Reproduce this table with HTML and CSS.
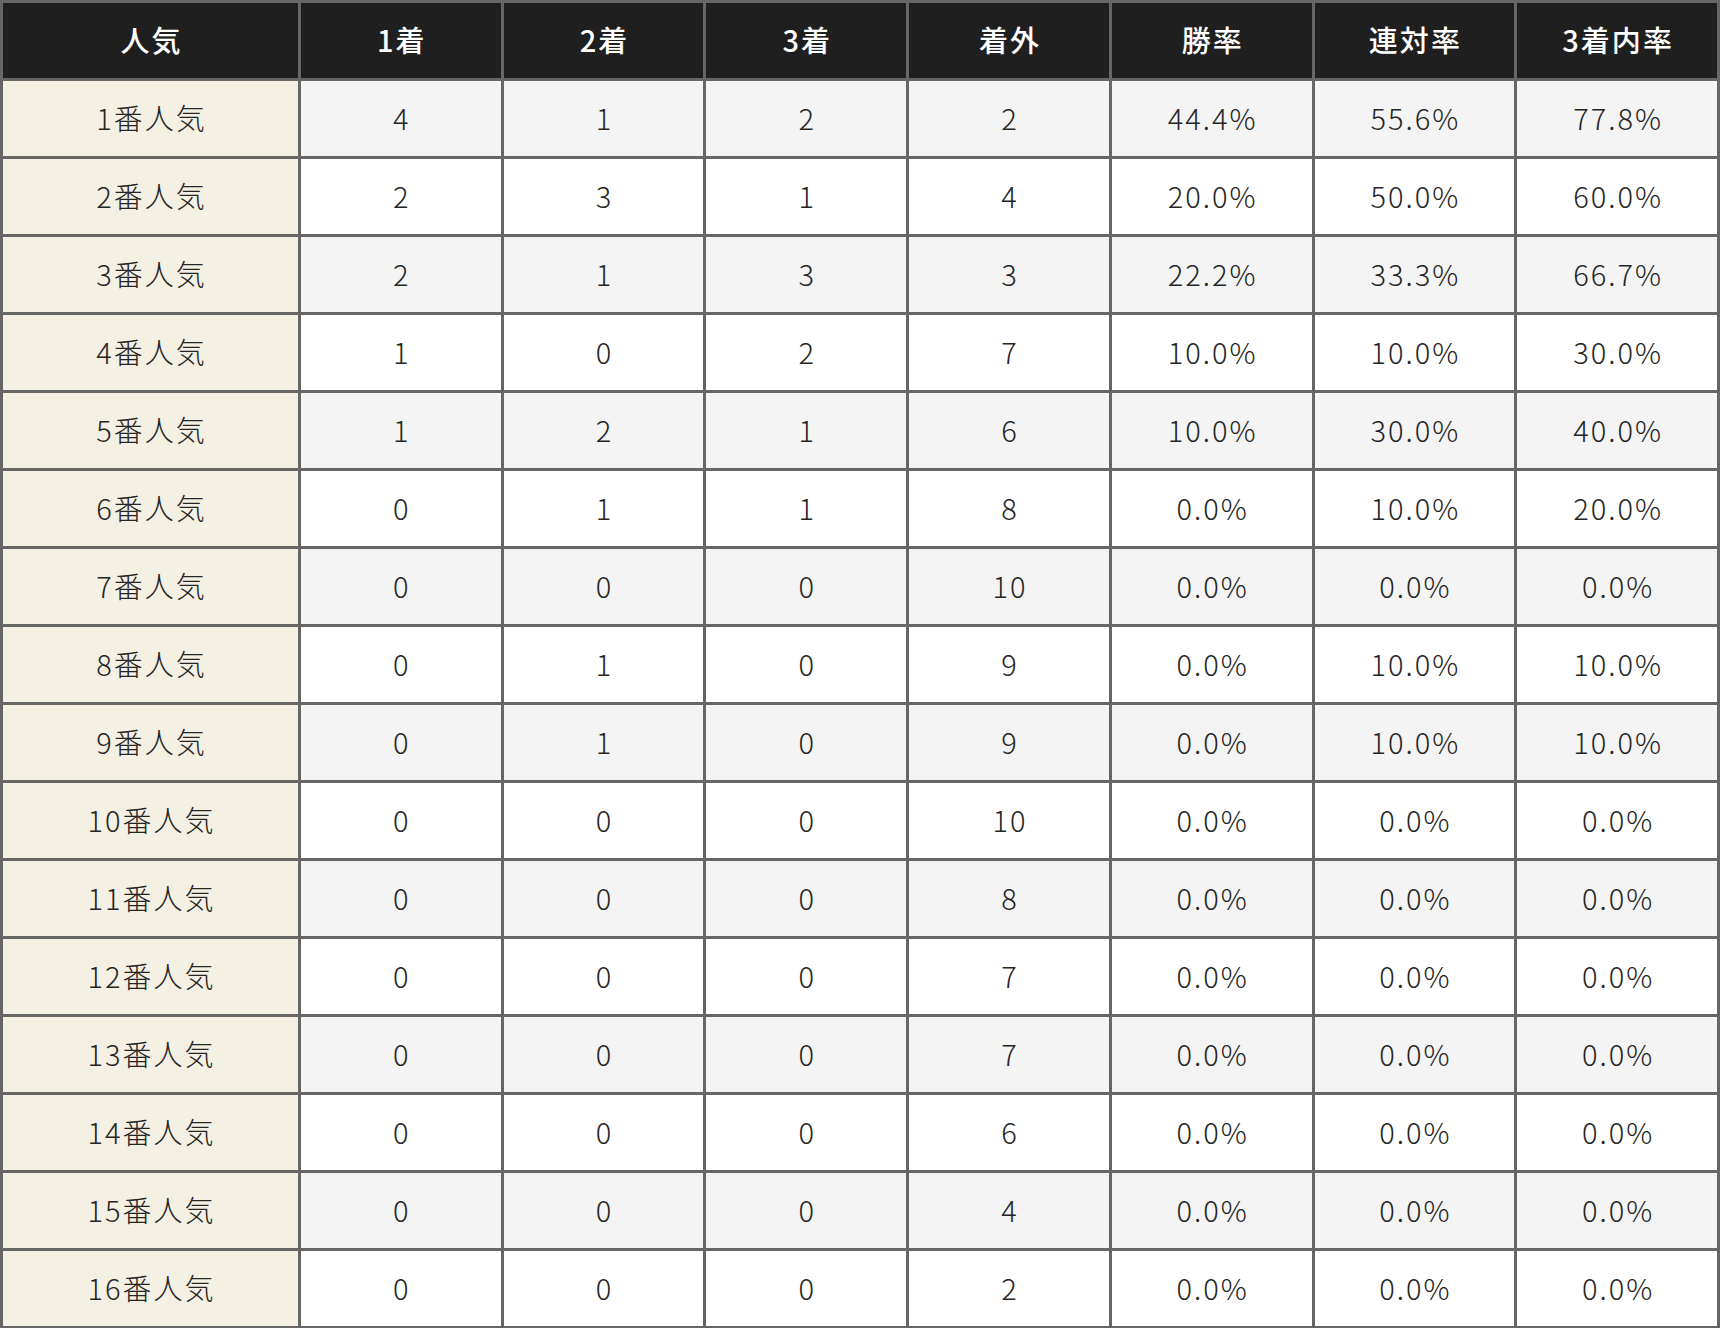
FILE: index.html
```html
<!DOCTYPE html>
<html lang="ja">
<head>
<meta charset="utf-8">
<link rel="stylesheet" href="styles.css">
</head>
<body>
<table class="stats">
  <colgroup>
    <col class="col-first">
    <col span="7">
  </colgroup>
  <thead>
    <tr><th>人気</th><th>1着</th><th>2着</th><th>3着</th><th>着外</th><th>勝率</th><th>連対率</th><th>3着内率</th></tr>
  </thead>
  <tbody>
    <tr><th>1番人気</th><td>4</td><td>1</td><td>2</td><td>2</td><td>44.4%</td><td>55.6%</td><td>77.8%</td></tr>
    <tr><th>2番人気</th><td>2</td><td>3</td><td>1</td><td>4</td><td>20.0%</td><td>50.0%</td><td>60.0%</td></tr>
    <tr><th>3番人気</th><td>2</td><td>1</td><td>3</td><td>3</td><td>22.2%</td><td>33.3%</td><td>66.7%</td></tr>
    <tr><th>4番人気</th><td>1</td><td>0</td><td>2</td><td>7</td><td>10.0%</td><td>10.0%</td><td>30.0%</td></tr>
    <tr><th>5番人気</th><td>1</td><td>2</td><td>1</td><td>6</td><td>10.0%</td><td>30.0%</td><td>40.0%</td></tr>
    <tr><th>6番人気</th><td>0</td><td>1</td><td>1</td><td>8</td><td>0.0%</td><td>10.0%</td><td>20.0%</td></tr>
    <tr><th>7番人気</th><td>0</td><td>0</td><td>0</td><td>10</td><td>0.0%</td><td>0.0%</td><td>0.0%</td></tr>
    <tr><th>8番人気</th><td>0</td><td>1</td><td>0</td><td>9</td><td>0.0%</td><td>10.0%</td><td>10.0%</td></tr>
    <tr><th>9番人気</th><td>0</td><td>1</td><td>0</td><td>9</td><td>0.0%</td><td>10.0%</td><td>10.0%</td></tr>
    <tr><th>10番人気</th><td>0</td><td>0</td><td>0</td><td>10</td><td>0.0%</td><td>0.0%</td><td>0.0%</td></tr>
    <tr><th>11番人気</th><td>0</td><td>0</td><td>0</td><td>8</td><td>0.0%</td><td>0.0%</td><td>0.0%</td></tr>
    <tr><th>12番人気</th><td>0</td><td>0</td><td>0</td><td>7</td><td>0.0%</td><td>0.0%</td><td>0.0%</td></tr>
    <tr><th>13番人気</th><td>0</td><td>0</td><td>0</td><td>7</td><td>0.0%</td><td>0.0%</td><td>0.0%</td></tr>
    <tr><th>14番人気</th><td>0</td><td>0</td><td>0</td><td>6</td><td>0.0%</td><td>0.0%</td><td>0.0%</td></tr>
    <tr><th>15番人気</th><td>0</td><td>0</td><td>0</td><td>4</td><td>0.0%</td><td>0.0%</td><td>0.0%</td></tr>
    <tr><th>16番人気</th><td>0</td><td>0</td><td>0</td><td>2</td><td>0.0%</td><td>0.0%</td><td>0.0%</td></tr>
  </tbody>
</table>
</body>
</html>
```
FILE: styles.css
```css
html, body {
  margin: 0;
  padding: 0;
  background: #ffffff;
}
.stats {
  width: 1720px;
  border-collapse: collapse;
  table-layout: fixed;
  font-family: "Noto Sans CJK JP", "Noto Sans", sans-serif;
  font-size: 29px;
  color: #252525;
  letter-spacing: 0.07em;
}
.col-first {
  width: 298px;
}
.stats th,
.stats td {
  border: 3px solid #666666;
  text-align: center;
  padding: 0 0 2px 0.07em;
  height: 73px;
  font-weight: 300;
  line-height: 1;
}
.stats thead th {
  background: #1f1f1f;
  color: #ffffff;
  font-weight: 500;
  height: 73px;
}
.stats tbody th {
  background: #f5f0e4;
}
.stats tbody tr:nth-child(odd) td {
  background: #f4f4f4;
}
.stats tbody tr:nth-child(even) td {
  background: #ffffff;
}
```
